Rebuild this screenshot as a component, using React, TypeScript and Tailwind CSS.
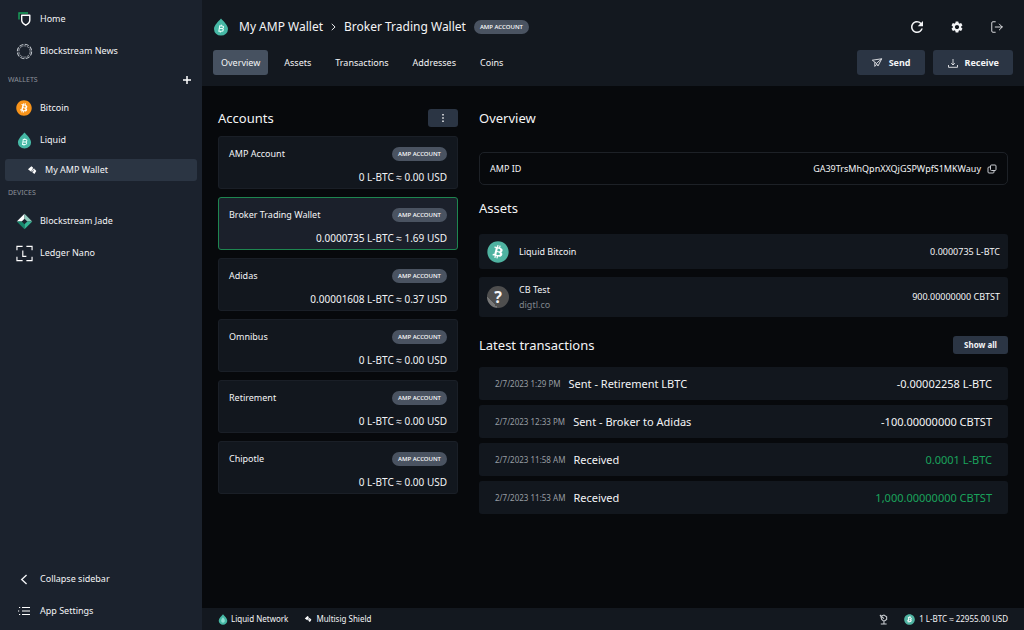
import React, { useState } from 'react';
import { FaBitcoin } from 'react-icons/fa';
import { MdRefresh, MdSettings } from 'react-icons/md';
import { FiLogOut } from 'react-icons/fi';

const accounts = [
  { name: 'AMP Account', balance: '0 L-BTC ≈ 0.00 USD' },
  { name: 'Broker Trading Wallet', balance: '0.0000735 L-BTC ≈ 1.69 USD' },
  { name: 'Adidas', balance: '0.00001608 L-BTC ≈ 0.37 USD' },
  { name: 'Omnibus', balance: '0 L-BTC ≈ 0.00 USD' },
  { name: 'Retirement', balance: '0 L-BTC ≈ 0.00 USD' },
  { name: 'Chipotle', balance: '0 L-BTC ≈ 0.00 USD' },
];

const transactions = [
  { date: '2/7/2023 1:29 PM', label: 'Sent - Retirement LBTC', amount: '-0.00002258 L-BTC', incoming: false },
  { date: '2/7/2023 12:33 PM', label: 'Sent - Broker to Adidas', amount: '-100.00000000 CBTST', incoming: false },
  { date: '2/7/2023 11:58 AM', label: 'Received', amount: '0.0001 L-BTC', incoming: true },
  { date: '2/7/2023 11:53 AM', label: 'Received', amount: '1,000.00000000 CBTST', incoming: true },
];

const tabs = ['Overview', 'Assets', 'Transactions', 'Addresses', 'Coins'];

type IconProps = { className?: string };

const HomeIcon = ({ className }: IconProps) => (
  <svg viewBox="0 0 16 16" fill="none" className={className}>
    <path d="M3 8.500V2H12" stroke="#17a35b" strokeWidth="1.400" />
    <path d="M5.700 4.300h8.100v5c0 2.200-1.500 3.500-4.050 4.900-2.550-1.400-4.050-2.700-4.050-4.900z" stroke="#fff" strokeWidth="1.400" strokeLinejoin="round" />
  </svg>
);

const NewsIcon = ({ className }: IconProps) => (
  <svg viewBox="0 0 18 18" fill="none" stroke="#c5cad0" className={className}>
    <circle cx="9" cy="9" r="7.600" strokeWidth="1.100" strokeDasharray="4.500 1.470" />
    <circle cx="9" cy="9" r="6" strokeWidth="0.900" strokeDasharray="3 0.770" opacity="0.800" />
  </svg>
);

const LiquidIcon = ({ className }: IconProps) => (
  <svg viewBox="0 0 16 18" className={className}>
    <path d="M8 .5C5.500 3.400 1 7.200 1 11a7 6.600 0 0 0 14 0C15 7.200 10.500 3.400 8 .5z" fill="#46b8a5" />
    <path d="M6.800 7.300l-1 6.200M6.400 8h2.700c2 0 1.800 2.500-.2 2.500H6.200h2.500c2.300 0 2 2.800-.3 2.800H5.400M8.400 6.700l-.2 1M7.500 13.500l-.2 1" fill="none" stroke="#e9fffb" strokeWidth="1.100" />
  </svg>
);

const DropIcon = ({ className }: IconProps) => (
  <svg viewBox="0 0 16 18" className={className}>
    <path d="M8 .5C5.500 3.400 1 7.200 1 11a7 6.600 0 0 0 14 0C15 7.200 10.500 3.400 8 .5z" fill="#46b8a5" />
    <path d="M8 5.500c-1.800 2.200-3 4-3 5.700s1.300 3 3 3 3-1.300 3-3-1.200-3.500-3-5.700z" fill="#8fe0d3" />
  </svg>
);

const MultisigIcon = ({ className }: IconProps) => (
  <svg viewBox="0 0 10 10" fill="#fff" className={className}>
    <path d="M1 4.300L4.400 1.200 6 2.600 5.700 4l1.500-.4L9.300 6 7.400 8.900 5.300 7.300 5.600 6l-1.500.7z" />
    <path d="M4.200 6.500l1.800-2.700M5.500 7.100l1.700-2.700" stroke="#2b3543" strokeWidth="0.500" />
  </svg>
);

const JadeIcon = ({ className }: IconProps) => (
  <svg viewBox="0 0 18 18" className={className}>
    <path d="M9 .8V6L6 9H.8z" fill="#fff" />
    <path d="M9 .8L17.200 9H12L9 6z" fill="#8ec9bb" />
    <path d="M.8 9H6l3 3v5.200z" fill="#16876b" />
    <path d="M17.200 9H12l-3 3v5.200z" fill="#33b595" />
  </svg>
);

const LedgerIcon = ({ className }: IconProps) => (
  <svg viewBox="0 0 18 18" fill="none" stroke="#fff" strokeWidth="1.200" className={className}>
    <path d="M1 5.500V1.500h6M11 1.500h6v4M1 12.500v4h6M11 16.500h6v-4M7.200 5.800v6.200H11" />
  </svg>
);

const ChevronIcon = ({ className }: IconProps) => (
  <svg viewBox="0 0 8 12" fill="none" stroke="currentColor" strokeWidth="1.500" className={className}>
    <path d="M6.800 1L1.500 6l5.300 5" />
  </svg>
);

const ListIcon = ({ className }: IconProps) => (
  <svg viewBox="0 0 12 10" fill="none" stroke="#fff" strokeWidth="1.200" className={className}>
    <path d="M4 1.500h8M4 5h8M4 8.500h8M1 1.500h1.200M0 5h1.200M1 8.500h1.200" />
  </svg>
);

const SendIcon = ({ className }: IconProps) => (
  <svg viewBox="0 0 12 12" fill="none" stroke="#e6e8eb" strokeWidth="0.900" strokeLinejoin="round" className={className}>
    <path d="M1.300 3.200L10.700 1.800 7 9 5.400 6.400zM5.400 6.400L10.700 1.800M3.800 5.200v4.200l2.100-2.200" />
  </svg>
);

const ReceiveIcon = ({ className }: IconProps) => (
  <svg viewBox="0 0 12 12" fill="none" stroke="#e6e8eb" strokeWidth="0.900" className={className}>
    <path d="M6 2v6M4.200 6.200L6 8l1.800-1.800M1.500 8v2.300h9V8" />
  </svg>
);

const CopyIcon = ({ className }: IconProps) => (
  <svg viewBox="0 0 10 10" fill="none" stroke="#c9ccd1" className={className}>
    <rect x="3.500" y="1" width="5.500" height="5.500" rx="1" />
    <path d="M3.500 3H2a1 1 0 0 0-1 1v4a1 1 0 0 0 1 1h4a1 1 0 0 0 1-1V6.500" />
  </svg>
);

const TorIcon = ({ className }: IconProps) => (
  <svg viewBox="0 0 10 12" fill="none" stroke="#c9ccd1" strokeWidth="1.200" className={className}>
    <path d="M2 2.500l3.500-1.500L8.500 3v3L5.500 8 3 6zM1 1l4.500 4M5.500 8v3M2 11h6.500" />
  </svg>
);

const CoinIcon = ({ className, color }: { className: string; color: string }) => (
  <span className={`flex shrink-0 rounded-full bg-[radial-gradient(circle_closest-side,white_80%,transparent_81%)] ${color}`}>
    <FaBitcoin className={className} />
  </span>
);

const Badge = () => (
  <span className="rounded-full bg-[#4a5361] px-[6px] text-[6px] leading-[14px] font-medium text-white">AMP ACCOUNT</span>
);

const NavItem = ({ icon, label }: { icon: React.ReactNode; label: string }) => (
  <button className="flex h-8 w-full items-center gap-2 pl-4 text-left">
    <span className="flex w-4 justify-center">{icon}</span>
    {label}
  </button>
);

const Sidebar = () => (
  <nav className="flex w-[202px] shrink-0 flex-col bg-[#1b222d] py-[3px]">
    <NavItem icon={<HomeIcon className="size-4" />} label="Home" />
    <NavItem icon={<NewsIcon className="size-[17px] shrink-0" />} label="Blockstream News" />
    <div className="flex h-[25px] items-center justify-between pr-[10px] pl-2">
      <h2 className="text-[7px] text-[#8b919a]">WALLETS</h2>
      <button aria-label="Add wallet">
        <svg viewBox="0 0 10 10" stroke="#fff" strokeWidth="1.500" className="size-[10px]">
          <path d="M5 1v8M1 5h8" />
        </svg>
      </button>
    </div>
    <NavItem icon={<CoinIcon className="size-4" color="text-[#f7931a]" />} label="Bitcoin" />
    <NavItem icon={<LiquidIcon className="h-[17px] w-[15px]" />} label="Liquid" />
    <button className="mx-[5px] mt-[3px] flex h-[22px] items-center gap-2 rounded-[3px] bg-[#2b3543] pl-[22px] text-left">
      <MultisigIcon className="size-[10px]" />
      My AMP Wallet
    </button>
    <h2 className="pl-2 text-[7px] leading-[24px] text-[#8b919a]">DEVICES</h2>
    <NavItem icon={<JadeIcon className="size-[17px] shrink-0" />} label="Blockstream Jade" />
    <NavItem icon={<LedgerIcon className="size-[17px] shrink-0" />} label="Ledger Nano" />
    <div className="mt-auto">
      <NavItem icon={<ChevronIcon className="h-[11px] w-2" />} label="Collapse sidebar" />
      <NavItem icon={<ListIcon className="h-[10px] w-3" />} label="App Settings" />
    </div>
  </nav>
);

export default function App() {
  const [activeTab, setActiveTab] = useState('Overview');
  const [selected, setSelected] = useState('Broker Trading Wallet');

  return (
    <div className="flex min-h-screen bg-[#07090c] font-['Noto_Sans',sans-serif] text-[9px] leading-4 text-[#f3f4f6]">
      <Sidebar />
      <div className="flex min-w-0 flex-1 flex-col">
        <header className="bg-[#13181f] px-[11px] pb-[11px]">
          <div className="flex h-[50px] items-center pt-1">
            <LiquidIcon className="h-[18px] w-4" />
            <h1 className="ml-[10px] flex items-center text-[12px]">
              My AMP Wallet
              <ChevronIcon className="mx-2 h-2 w-[5px] rotate-180" />
              Broker Trading Wallet
            </h1>
            <span className="ml-2 flex"><Badge /></span>
            <div className="ml-auto flex items-center gap-[22px] pr-[7px]">
              <button aria-label="Refresh" className="flex w-[18px] justify-center"><MdRefresh className="size-[18px]" /></button>
              <button aria-label="Settings" className="flex w-[18px] justify-center"><MdSettings className="size-[14px]" /></button>
              <button aria-label="Log out" className="flex w-[18px] justify-center"><FiLogOut strokeWidth={1.5} className="size-[14px]" /></button>
            </div>
          </div>
          <div className="flex items-center">
            <div className="flex gap-2">
              {tabs.map(tab => (
                <button
                  key={tab}
                  onClick={() => setActiveTab(tab)}
                  className={`h-[25px] rounded-[3px] px-2 ${tab === activeTab ? 'bg-[#465160]' : ''}`}
                >
                  {tab}
                </button>
              ))}
            </div>
            <div className="ml-auto flex gap-2 font-bold">
              <button className="flex h-[25px] items-center gap-[6px] rounded-[3px] bg-[#2b3544] px-[14px]">
                <SendIcon className="size-3" />
                Send
              </button>
              <button className="flex h-[25px] items-center gap-[6px] rounded-[3px] bg-[#2b3544] px-[14px]">
                <ReceiveIcon className="size-3" />
                Receive
              </button>
            </div>
          </div>
        </header>

        <main className="flex flex-1 gap-[21px] px-4 pt-[22px] pb-4">
          <section className="w-60 shrink-0">
            <div className="flex h-5 items-center justify-between">
              <h2 className="text-[13px]">Accounts</h2>
              <button aria-label="Account options" className="flex h-[18px] w-[30px] items-center justify-center rounded-[3px] bg-[#2b3544]">
                <svg viewBox="0 0 2 8" fill="#fff" className="h-2 w-[2px]">
                  <path d="M.3 0h1.400v1.400H.3zM.3 3.300h1.400v1.400H.3zM.3 6.600h1.400V8H.3z" />
                </svg>
              </button>
            </div>
            <div className="mt-2 flex flex-col gap-2">
              {accounts.map(account => (
                <button
                  key={account.name}
                  onClick={() => setSelected(account.name)}
                  className={`flex h-[53px] flex-col justify-between rounded-[3px] border px-[10px] pt-[9px] pb-[3px] ${
                    account.name === selected ? 'border-[#1e8650] bg-[#1b202b]' : 'border-[#1a1f27] bg-[#12171e]'
                  }`}
                >
                  <span className="flex w-full items-center justify-between">
                    {account.name}
                    <Badge />
                  </span>
                  <span className="w-full text-right text-[10px]">{account.balance}</span>
                </button>
              ))}
            </div>
          </section>

          <section className="min-w-0 flex-1">
            <h2 className="text-[13px] leading-5">Overview</h2>
            <div className="mt-6 flex h-[33px] items-center rounded-[5px] border border-[#1d2127] px-[10px]">
              <span>AMP ID</span>
              <span className="ml-auto">GA39TrsMhQpnXXQjGSPWpfS1MKWauy</span>
              <button aria-label="Copy AMP ID" className="ml-[6px]"><CopyIcon className="size-[10px]" /></button>
            </div>

            <h2 className="mt-[13px] text-[13px] leading-5">Assets</h2>
            <div className="mt-4 flex h-[35px] items-center gap-[10px] rounded-[3px] bg-[#12171e] px-2">
              <CoinIcon className="size-[22px]" color="text-[#4fb3a1]" />
              <span>Liquid Bitcoin</span>
              <span className="ml-auto">0.0000735 L-BTC</span>
            </div>
            <div className="mt-2 flex h-10 items-center gap-[10px] rounded-[3px] bg-[#12171e] px-2">
              <span className="flex size-[22px] items-center justify-center rounded-full bg-linear-to-tr from-[#777777] from-25% to-[#4e4e4e] to-25% text-[16px] font-bold">?</span>
              <span className="flex flex-col leading-[15px]">
                CB Test
                <span className="text-[#80858c]">digtl.co</span>
              </span>
              <span className="ml-auto">900.00000000 CBTST</span>
            </div>

            <div className="mt-[18px] flex h-5 items-center justify-between">
              <h2 className="text-[13px]">Latest transactions</h2>
              <button className="h-[18px] rounded-[3px] bg-[#2b3544] px-[11px] text-[8px] font-bold">Show all</button>
            </div>
            <ul className="mt-3 flex flex-col gap-[5px]">
              {transactions.map(tx => (
                <li key={tx.date} className="flex h-[33px] items-center gap-2 rounded-[3px] bg-[#12171e] px-4 text-[11px]">
                  <span className="text-[8px] text-[#989da3]">{tx.date}</span>
                  <span>{tx.label}</span>
                  <span className={`ml-auto ${tx.incoming ? 'text-[#1aa35c]' : ''}`}>{tx.amount}</span>
                </li>
              ))}
            </ul>
          </section>
        </main>

        <footer className="flex h-[22px] items-center bg-[#13181f] px-4 text-[8px]">
          <DropIcon className="mr-[3px] h-[11px] w-[10px]" />
          <span>Liquid Network</span>
          <MultisigIcon className="mr-1 ml-4 size-2" />
          <span>Multisig Shield</span>
          <TorIcon className="ml-auto h-[11px] w-[9px]" />
          <span className="mr-1 ml-4 flex"><CoinIcon className="size-[11px]" color="text-[#4fb3a1]" /></span>
          <span>1 L-BTC ≈ 22955.00 USD</span>
        </footer>
      </div>
    </div>
  );
}
